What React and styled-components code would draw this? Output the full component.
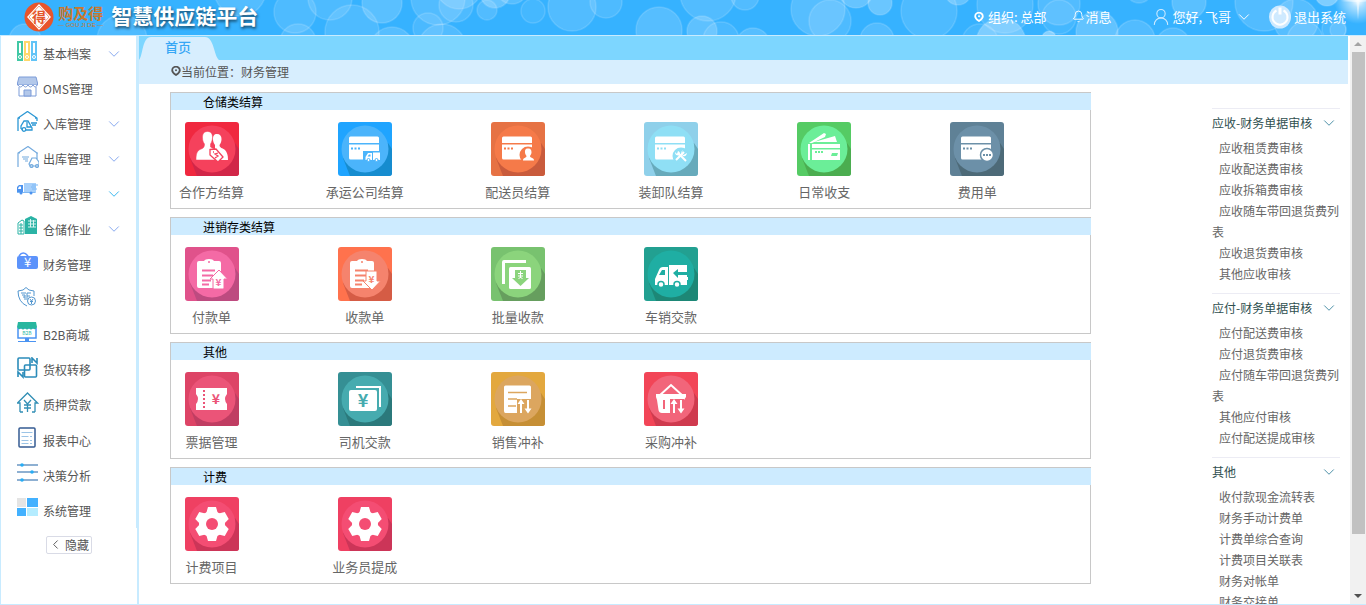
import React, { useState } from 'react';
import styled, { createGlobalStyle } from 'styled-components';
import { Bell, ChevronDown, ChevronLeft, UserRound } from 'lucide-react';

const bubbles = [
  [25, 40, 16, 0.15],
  [122, 40, 25, 0.12],
  [240, -10, 26, 0.15],
  [295, 12, 21, 0.12],
  [298, 42, 18, 0.12],
  [330, -2, 22, 0.12],
  [352, 32, 27, 0.12],
  [382, 3, 20, 0.18],
  [392, 49, 22, 0.16],
  [428, 28, 15, 0.1],
  [438, -2, 27, 0.14],
  [442, 48, 24, 0.14],
  [456, 5, 17, 0.12],
  [459, -14, 23, 0.16],
  [487, 10, 10, 0.14],
  [495, -7, 15, 0.24],
  [512, -12, 16, 0.16],
  [533, 11, 12, 0.08],
  [572, 7, 24, 0.14],
  [606, 2, 16, 0.12],
  [659, 30, 23, 0.16],
  [702, 31, 15, 0.2],
  [708, -7, 28, 0.14],
  [721, 40, 18, 0.1],
  [745, -4, 14, 0.14],
  [753, 45, 17, 0.16],
  [818, 9, 27, 0.16],
  [830, 21, 21, 0.12],
  [856, -9, 17, 0.24],
  [877, 40, 17, 0.14],
  [880, 3, 12, 0.26],
  [929, 11, 28, 0.12],
  [958, -8, 13, 0.24],
  [980, 42, 18, 0.08],
  [1001, 43, 25, 0.3],
  [1005, 5, 28, 0.12],
  [1049, 38, 7, 0.4],
  [1059, 4, 21, 0.14],
  [1059, 17, 17, 0.08],
  [1097, 32, 21, 0.22],
  [1135, 40, 20, 0.14],
  [1139, -10, 13, 0.14],
  [1173, 45, 17, 0.14],
  [1189, 2, 17, 0.18],
  [1264, 2, 29, 0.14],
  [1296, 21, 22, 0.16],
  [1305, 40, 18, 0.12],
  [1327, -6, 12, 0.36],
  [1334, 29, 12, 0.1],
  [1338, 30, 8, 0.14],
];

const Binders = () => (
  <>
    <rect x="0" y="0" width="6" height="20" fill="#41c8a5" />
    <rect x="7" y="0" width="6" height="20" fill="#ffd76a" />
    <rect x="14" y="0" width="6" height="20" fill="#62c4f7" />
    <path d="M2 2h2v10H2zM9 2h2v10H9zM16 2h2v10h-2z" fill="#fff" />
    <g fill="none" stroke="#fff">
      <circle cx="3" cy="16" r="1.5" />
      <circle cx="10" cy="16" r="1.5" />
      <circle cx="17" cy="16" r="1.5" />
    </g>
  </>
);

const Shop = () => (
  <>
    <path d="M2 1h17l1.500 6v2H.5V7z" fill="#b3c8ea" stroke="#7d9cd8" />
    <path d="M1 9q2.500 4 5 0q2.500 4 5 0q2.500 4 5 0q2.500 4 4 0M2 11v9h17v-9" fill="#fff" stroke="#7d9cd8" />
    <path d="M7 14h7v6H7z" fill="#b3c8ea" stroke="#7d9cd8" />
  </>
);

const InStock = () => (
  <g fill="none" stroke="#2b97d4" strokeWidth="1.3">
    <path d="M1 20V7l9.500-6.500L20 7v3M1 7h2M18 7h2" />
    <path d="M4 18v-3l3-5h4l4 7v2H9M4 18h1M10 11v5h4M14 12h6M15 14h4" />
    <circle cx="7" cy="18.500" r="1.800" />
  </g>
);

const OutStock = () => (
  <g fill="none" stroke="#73aade" strokeWidth="1.200">
    <path d="M1 21V7l10-6.500L20 7v6M1 7h2M19 7h2" />
    <path d="M12 18l3-6h4l3 4v4h-9zM5 11h7M6 13h5M8 15h3" />
    <circle cx="14.500" cy="20" r="1.500" />
    <circle cx="20" cy="20" r="1.500" />
  </g>
);

const Truck = () => (
  <>
    <path d="M7 2h12v10H7z" fill="#a7d0fb" />
    <path d="M15 4h6M14 6h5M15 8h5" stroke="#7db8f5" />
    <path d="M0 6l2-2h4v8H0z" fill="#4c92ee" />
    <path d="M1 8l1-2.500h2V8z" fill="#fff" />
    <path d="M0 11h18v1H0z" fill="#7db8f5" />
    <circle cx="4" cy="12" r="1.500" fill="#4c92ee" />
    <circle cx="14" cy="12" r="1.500" fill="#4c92ee" />
  </>
);

const Buildings = () => (
  <>
    <path d="M8 18V3l6-3 6 3v15z" fill="#2bb3a5" />
    <path d="M1 18V7l4-3 2 1v13z" fill="#fff" stroke="#2bb3a5" />
    <path d="M4 7v11M2 9h4M2 12h4M2 15h4" stroke="#2bb3a5" />
    <path d="M13.500 3v8M16.500 4v7M11 5h8M11 8h8M11 11h8" stroke="#d9f3ef" />
  </>
);

const Wallet = () => (
  <>
    <path d="M2 5q4-6 9 0" fill="none" stroke="#5c93fb" strokeWidth="1.500" />
    <rect x="0" y="5" width="21" height="13" rx="2" fill="#5c93fb" />
    <text x="10.500" y="16" textAnchor="middle" fontSize="13" fill="#fff">¥</text>
  </>
);

const Shield = () => (
  <g fill="none" stroke="#5296cf">
    <path d="M10 19Q1 15 1 4l5-1 3-2.500L12 3l5 1v5" />
    <path d="M4 6h5M5 8h3v5M6 10h2M10 6h4M10 6v7M10 9h3" />
    <circle cx="14.500" cy="14" r="4" fill="#fff" />
    <path d="M13 12l1.500 2 1.500-2M14.500 14v3M13 14.500h3" />
  </g>
);

const Online = () => (
  <>
    <rect x="1" y="6" width="18" height="10" fill="#fff" stroke="#4a93f2" strokeWidth="1.500" />
    <path d="M1 0h18l1 5q-2 4-4 1q-2 3-4 0q-2 3-4 0q-2 3-4 0Q2 9 0 5z" fill="#27b69f" />
    <text x="10" y="13" textAnchor="middle" fontSize="5" fill="#27b69f">B2B</text>
    <path d="M8 16h4v3h7v1H1v-1h7z" fill="#4a93f2" />
  </>
);

const Transfer = () => (
  <g fill="none" stroke="#2b8cba" strokeWidth="1.600">
    <rect x="1" y="1" width="12" height="12" rx="1" />
    <rect x="7.500" y="8" width="12" height="12" rx="1" />
    <path d="M15 6V1l5 5V1M1 20v-5l5 5v-5" />
  </g>
);

const Pledge = () => (
  <g fill="none" stroke="#328fb5" strokeWidth="1.300">
    <path d="M3 20v-9H.5L10.500 1l10 10H18v9M3 20h3M15 20h3" />
    <path d="M7 8l3.500 4L14 8M10.500 12v8M7 13h7M7 16h7" />
  </g>
);

const Report = () => (
  <>
    <rect x="2" y="1" width="16" height="19" rx="1" fill="#fff" stroke="#355b92" strokeWidth="1.500" />
    <path d="M4.500 5.500h11M4.500 9.500h7M13 9.500h2M4.500 13.500h7M13 13.500h2M4.500 16.500h7M13 16.500h2" stroke="#9cc4e6" />
  </>
);

const Sliders = () => (
  <>
    <path d="M0 3h21M0 10h21M0 18h21" stroke="#6a97c4" strokeWidth="1.500" />
    <g fill="#27adf5">
      <circle cx="5" cy="3" r="1.800" />
      <circle cx="15" cy="10" r="1.800" />
      <circle cx="5" cy="18" r="1.800" />
    </g>
  </>
);

const Blocks = () => (
  <>
    <path d="M0 1h9v9H0z" fill="#e4e4e4" />
    <path d="M10 1h11v9H10z" fill="#42b1ff" />
    <path d="M0 11h9v8H0z" fill="#42b1ff" />
    <path d="M10 11h11v8H10z" fill="#b4ecff" />
  </>
);

const menu = [
  { name: '基本档案', icon: <Binders />, more: true },
  { name: 'OMS管理', icon: <Shop /> },
  { name: '入库管理', icon: <InStock />, more: true },
  { name: '出库管理', icon: <OutStock />, more: true },
  { name: '配送管理', icon: <Truck />, more: true, active: true },
  { name: '仓储作业', icon: <Buildings />, more: true },
  { name: '财务管理', icon: <Wallet /> },
  { name: '业务访销', icon: <Shield /> },
  { name: 'B2B商城', icon: <Online /> },
  { name: '货权转移', icon: <Transfer /> },
  { name: '质押贷款', icon: <Pledge /> },
  { name: '报表中心', icon: <Report /> },
  { name: '决策分析', icon: <Sliders /> },
  { name: '系统管理', icon: <Blocks /> },
];

// glyphs on the tiles: white on the disc, `c` is the disc colour for cut-outs
const Card = ({ c }) => (
  <>
    <path d="M11 21v-5q0-1.500 1.500-1.500h27q1.500 0 1.500 1.500v5zM11 22.500h30V36q0 1.500-1.500 1.500h-27Q11 37.500 11 36z" />
    <path d="M13 25.500h2v2h-2zM16.500 25.500h2v2h-2zM20 25.500h2v2h-2z" fill={c} />
  </>
);

const partners = c => (
  <>
    <path d="M32 12c3 0 4.500 2 4.500 5 0 2-.5 4-2 6 0 3 3 3 5.500 5 2 2 3 5 3 10H30V23c-1.500-2-2-4-2-6 0-3 1-5 4-5z" />
    <path
      d="M22.500 9.500c4 0 5 3 5 6 0 2-1 5-2 6.500v3c3 2 8 3 10 13H11c0-6 1-9 4-10.500 3-1 4.500-2 4.500-5.500-1.500-2-2-4-2-6.500 0-3 1-6 5-6z"
      stroke={c}
      strokeWidth="0.500"
    />
    <path d="M25 27.500l6-.5 7 8-5 5-8-7z" stroke={c} strokeWidth="1.300" />
    <path d="M33 31l-3 1 3 2-3 2M28 30h1" fill="none" stroke={c} strokeWidth="1.300" />
  </>
);

const carrier = c => (
  <>
    <Card c={c} />
    <path d="M25 41V29h18v12z" fill={c} />
    <path d="M35 30.500h7V38h-7zM27.500 38v-3l2.500-4h4v7z" />
    <path d="M29.500 34.500l1.500-2h1.500v2z" fill={c} />
    <circle cx="30.500" cy="38" r="1.500" stroke={c} />
    <circle cx="38.500" cy="38" r="1.500" stroke={c} />
  </>
);

const courier = c => (
  <>
    <Card c={c} />
    <circle cx="37" cy="33" r="8.500" fill={c} />
    <path d="M37 26.500c3 0 3.500 2 3.500 4 0 1.500-1 2.500-1.500 3.500 0 2 4 1.500 4 4.500H32c0-3 3.500-2.500 3.500-4.500-.5-1-1.500-2-1.500-3.500 0-2 0-4 3-4z" />
  </>
);

const loaders = c => (
  <>
    <Card c={c} />
    <circle cx="37" cy="34" r="8.500" fill={c} />
    <path d="M34 31l8 8M32 38l8-8" fill="none" stroke="#fff" strokeWidth="2" />
    <path d="M31 30l2 2 1-3q3 1 1.500 4.500Q31 34 31 30zM39 28l-1.500 3.500 2 1.500 3.500-2q-1 4-4 3l-2-2q0-3 2-4z" />
  </>
);

const daily = c => (
  <>
    <path d="M12 21l15-10 2 1-1 3-13 6zM17 20l21-6 2 6zM11 22h2v16h-2zM15 22h28v4H15zM15 27.500h28V38H15z" />
    <path d="M18 29h2v2h-2zM21 29h2v2h-2zM24 29h2v2h-2zM35 31h6l-1 3h-6z" fill={c} />
  </>
);

const expense = c => (
  <>
    <Card c={c} />
    <circle cx="37" cy="33" r="6.500" stroke={c} strokeWidth="1.500" />
    <path d="M33 32h2v2h-2zM36 32h2v2h-2zM39 32h2v2h-2z" fill={c} />
  </>
);

const Clipboard = ({ c }) => (
  <>
    <path d="M12 16q0-2 2-2h5q1-2 5-2t5 2h5q2 0 2 2v23q0 2-2 2H14q-2 0-2-2z" />
    <circle cx="24" cy="15" r="1" fill={c} />
    <path d="M17 23.500h13M17 28.500h11M17 33.500h9M17 37.500h7" stroke={c} strokeWidth="1.800" />
  </>
);

const Yen = ({ x, y, size, c }) => (
  <text x={x} y={y} textAnchor="middle" fontSize={size} fontWeight="700" fill={c}>
    ¥
  </text>
);

const payment = c => (
  <>
    <Clipboard c={c} />
    <path d="M34 23l8.500 9H39v9q0 1-1 1h-9q-1 0-1-1v-9h-3z" stroke={c} />
    <Yen x="33.500" y="39" size="10" c={c} />
  </>
);

const receipt = c => (
  <>
    <Clipboard c={c} />
    <path d="M28 24h11v10h3.500L34 43 25 34h3z" stroke={c} />
    <Yen x="33.500" y="36" size="10" c={c} />
  </>
);

const batch = c => (
  <>
    <path d="M11 37V15q0-2 2-2h22v3H14v21z" />
    <path d="M16 39V18h20" fill="none" stroke={c} />
    <rect x="18" y="20" width="22" height="22" rx="1.500" />
    <path d="M24 23h11v8h3l-8.500 8-8.500-8h3z" fill={c} />
    <path d="M29.500 24v7M27 26.500h5M27 29h5M27.500 32l2-2 2 2" fill="none" stroke="#fff" />
  </>
);

const vanSale = c => (
  <>
    <path d="M11 38v-6l4-9q1-3 4-3h5v18zM25 18h18v20H25z" />
    <path d="M15 28l3-5h3v5z" fill={c} />
    <path d="M29 26l5-4v3h9v3h-9v3z" fill={c} />
    <path d="M40 30h4v3h-4z" />
    <circle cx="17" cy="37.500" r="3" stroke={c} strokeWidth="1.500" />
    <circle cx="33" cy="37.500" r="3" stroke={c} strokeWidth="1.500" />
  </>
);

const ticket = c => (
  <>
    <path d="M11 16h31v6q-4 5 0 10v6H11v-6q4-5 0-10z" />
    <path d="M19 18v19" stroke={c} strokeWidth="2" strokeDasharray="2 2" />
    <Yen x="31" y="32" size="14" c={c} />
  </>
);

const driver = c => (
  <>
    <path d="M18 15h24v20" fill="none" stroke="#fff" strokeWidth="2" />
    <rect x="11" y="18" width="28" height="21" rx="2" />
    <Yen x="25" y="35" size="18" c={c} />
  </>
);

const Arrows = ({ c }) => (
  <>
    <path d="M26 27h14v15H26z" fill={c} />
    <path d="M30 41V31M37 28v10" stroke="#fff" strokeWidth="2" />
    <path d="M26.500 32l3.500-5 3.500 5zM33.500 36.500l3.500 5 3.500-5z" />
  </>
);

const saleAdjust = c => (
  <>
    <path d="M13 15q0-1.500 1.500-1.500h24q1.500 0 1.500 1.500v26H14.500Q13 41 13 39z" />
    <path d="M17 20.500h19M17 27h9M17 34h8" stroke={c} strokeWidth="1.500" />
    <Arrows c={c} />
  </>
);

const buyAdjust = c => (
  <>
    <path d="M15 24l12-11 12 11" fill="none" stroke="#fff" strokeWidth="2" />
    <path d="M12 22h30v3l-2 3-1 10q0 3-3 3H18q-3 0-3.500-3L13 28l-1-3z" />
    <path d="M20 28v9" stroke={c} strokeWidth="2" />
    <Arrows c={c} />
  </>
);

const gear = c => (
  <>
    <circle cx="27" cy="27" r="13" />
    {[0, 60, 120, 180, 240, 300].map(angle => (
      <path key={angle} d="M23 10h8l2 7H21z" transform={`rotate(${angle} 27 27)`} />
    ))}
    <circle cx="27" cy="27" r="6" fill={c} />
  </>
);

const groups = [
  {
    title: '仓储类结算',
    items: [
      { name: '合作方结算', art: partners, colors: ['#f0283f', '#f5415c', '#d12648'] },
      { name: '承运公司结算', art: carrier, colors: ['#1fa4ff', '#4bb4fb', '#168ccf'] },
      { name: '配送员结算', art: courier, colors: ['#e67244', '#f57a49', '#c95b3c'] },
      { name: '装卸队结算', art: loaders, colors: ['#8fd0ea', '#8fdff5', '#67aabb'] },
      { name: '日常收支', art: daily, colors: ['#55cb64', '#6bee98', '#4bad50'] },
      { name: '费用单', art: expense, colors: ['#5f8196', '#6c90a8', '#4d6a78'] },
    ],
  },
  {
    title: '进销存类结算',
    items: [
      { name: '付款单', art: payment, colors: ['#e0528b', '#f46aa5', '#bd4b80'] },
      { name: '收款单', art: receipt, colors: ['#ff724d', '#f5836d', '#d55c45'] },
      { name: '批量收款', art: batch, colors: ['#78c26f', '#8bd47c', '#669e5e'] },
      { name: '车销交款', art: vanSale, colors: ['#22a091', '#1faea3', '#1d8776'] },
    ],
  },
  {
    title: '其他',
    items: [
      { name: '票据管理', art: ticket, colors: ['#dd4466', '#eb5478', '#c03d62'] },
      { name: '司机交款', art: driver, colors: ['#358f94', '#46abaf', '#2b797b'] },
      { name: '销售冲补', art: saleAdjust, colors: ['#e3a83e', '#dca65f', '#c68f35'] },
      { name: '采购冲补', art: buyAdjust, colors: ['#f24557', '#f2657a', '#cf3a4e'] },
    ],
  },
  {
    title: '计费',
    items: [
      { name: '计费项目', art: gear, colors: ['#ef4062', '#f44d73', '#cc3558'] },
      { name: '业务员提成', art: gear, colors: ['#ef4062', '#f44d73', '#cc3558'] },
    ],
  },
];

const reports = [
  {
    title: '应收-财务单据审核',
    items: ['应收租赁费审核', '应收配送费审核', '应收拆箱费审核', '应收随车带回退货费列表', '应收退货费审核', '其他应收审核'],
  },
  {
    title: '应付-财务单据审核',
    items: ['应付配送费审核', '应付退货费审核', '应付随车带回退货费列表', '其他应付审核', '应付配送提成审核'],
  },
  {
    title: '其他',
    items: ['收付款现金流转表', '财务手动计费单', '计费单综合查询', '计费项目关联表', '财务对帐单', '财务交接单'],
  },
];

const Pin = () => (
  <svg width="10" height="10" viewBox="0 0 10 10" fill="none" stroke="currentColor">
    <path d="M5 9Q1.200 6.500 1.200 4.200a3.800 3.500 0 017.600 0Q8.800 6.500 5 9z" strokeWidth="1.800" />
    <circle cx="5" cy="4.200" r="1" fill="currentColor" stroke="none" />
  </svg>
);

const Tile = ({ name, art, colors }) => {
  const [base, disc, shade] = colors;

  return (
    <TileLink href="#">
      <svg width="54" height="54" viewBox="0 0 54 54" fill="#fff">
        <rect width="54" height="54" rx="3" fill={base} />
        <path d="M5 36l7 18h39q3 0 3-3V27l-4-6z" fill={shade} />
        <circle cx="27" cy="27" r="23.500" fill={disc} />
        {art(disc)}
      </svg>
      <TileName>{name}</TileName>
    </TileLink>
  );
};

const ReportGroup = ({ title, items }) => {
  const [open, setOpen] = useState(true);

  return (
    <ReportSection>
      <ReportTitle onClick={() => setOpen(!open)}>
        {title}
        <ChevronDown size={18} strokeWidth={1.3} color="#4a8fa6" />
      </ReportTitle>
      {open && (
        <PlainList>
          {items.map(item => (
            <ReportItem key={item}>
              <a href="#">{item}</a>
            </ReportItem>
          ))}
        </PlainList>
      )}
    </ReportSection>
  );
};

const App = () => {
  const [hidden, setHidden] = useState(false);

  return (
    <Page>
      <GlobalStyle />
      <Header>
        <Backdrop viewBox="0 0 1366 35" preserveAspectRatio="xMidYMid slice">
          <defs>
            <radialGradient id="flare">
              <stop offset="0" stopColor="#fff" />
              <stop offset="0.3" stopColor="#fff" stopOpacity="0.6" />
              <stop offset="1" stopColor="#fff" stopOpacity="0" />
            </radialGradient>
          </defs>
          {bubbles.map(([x, y, r, alpha]) => (
            <circle
              key={`${x}-${y}`}
              cx={x}
              cy={y}
              r={r}
              fill="#fff"
              fillOpacity={alpha}
              stroke="#fff"
              strokeOpacity="0.14"
              strokeWidth="1.500"
            />
          ))}
          <circle cx="1358" cy="0" r="24" fill="url(#flare)" />
          <path d="M1358-8l1.500 7 16 2-16 1-1.500 18-1.500-18-16-1 16-2z" fill="#fff" fillOpacity="0.5" />
        </Backdrop>
        <Brand>
          <svg width="30" height="32" viewBox="0 0 30 32">
            <circle cx="15" cy="16" r="14.500" fill="#e8552b" />
            <path d="M15 3l12 13-12 13L3 16z" fill="#fff" />
            <path d="M15 5l10 11-10 11L5 16z" fill="none" stroke="#f2a07f" />
            <text x="15" y="21" textAnchor="middle" fontSize="14" fontWeight="700" fill="#e4552c">得</text>
          </svg>
          <BrandText>
            <BrandName>购及得</BrandName>
            <BrandLatin>— GOU JI DE —</BrandLatin>
          </BrandText>
          <Title>智慧供应链平台</Title>
        </Brand>
        <Account>
          <HeaderLink href="#" $gap={4}>
            <Pin />
            组织: 总部
          </HeaderLink>
          <HeaderLink href="#" $gap={0} $before={26}>
            <Bell size={13} strokeWidth={1.7} />
            消息
          </HeaderLink>
          <HeaderLink href="#" $gap={1} $before={40}>
            <UserRound size={20} strokeWidth={1.3} color="#cfeaff" />
            您好, 飞哥
            <UserArrow size={18} strokeWidth={1.3} />
          </HeaderLink>
          <HeaderLink href="#" $gap={3} $before={16}>
            <svg width="22" height="24" viewBox="0 0 22 24" fill="none">
              <ellipse cx="11" cy="12" rx="11" ry="11.500" fill="#cfeaff" />
              <path d="M7.500 5.500a7.500 7.500 0 107 0" stroke="#fff" strokeWidth="2" />
              <path d="M11 2.500v7" stroke="#fff" strokeWidth="3" />
            </svg>
            退出系统
          </HeaderLink>
        </Account>
      </Header>
      <Body>
        <Sidebar>
          {!hidden && (
            <Menu>
              {menu.map(({ name, icon, more, active }) => (
                <li key={name}>
                  <MenuLink href="#">
                    <MenuIcon width="22" height="22" viewBox="0 0 22 22">
                      {icon}
                    </MenuIcon>
                    {name}
                    {more && <MenuArrow size={18} strokeWidth={1.3} $active={active} />}
                  </MenuLink>
                </li>
              ))}
            </Menu>
          )}
          <HideButton onClick={() => setHidden(!hidden)}>
            <ChevronLeft size={15} strokeWidth={1.5} />
            隐藏
          </HideButton>
        </Sidebar>
        <Main>
          <Workspace>
            <TabBar>
              <Tab>
                <TabShape viewBox="0 0 80 24" preserveAspectRatio="none">
                  <path d="M0 24C4 20 3 1 12 1h54c9 0 9 19 14 23z" fill="#d7eefe" />
                </TabShape>
                <TabName>首页</TabName>
              </Tab>
            </TabBar>
            <Location>
              <Pin />
              当前位置：财务管理
            </Location>
            <Content>
              <Panels>
                {groups.map(({ title, items }) => (
                  <Panel key={title}>
                    <PanelTitle>{title}</PanelTitle>
                    <Tiles>
                      {items.map(item => (
                        <Tile key={item.name} {...item} />
                      ))}
                    </Tiles>
                  </Panel>
                ))}
              </Panels>
              <Reports>
                {reports.map(group => (
                  <ReportGroup key={group.title} {...group} />
                ))}
              </Reports>
            </Content>
          </Workspace>
          <ScrollBar>
            <ScrollArrow viewBox="0 0 16 16">
              <path d="M4 10l4-4 4 4z" fill="#a3a3a3" />
            </ScrollArrow>
            <ScrollTrack>
              <ScrollThumb />
            </ScrollTrack>
            <ScrollArrow viewBox="0 0 16 16">
              <path d="M4 6l4 4 4-4z" fill="#505050" />
            </ScrollArrow>
          </ScrollBar>
        </Main>
      </Body>
    </Page>
  );
};

const GlobalStyle = createGlobalStyle`
  * {
    box-sizing: border-box;
  }

  body {
    margin: 0;
    font-family: 'Noto Sans CJK SC', sans-serif;
    font-size: 12px;
    color: #555;
  }

  a {
    color: inherit;
    text-decoration: none;
  }

  button {
    padding: 0;
    border: none;
    background: none;
    color: inherit;
    font: inherit;
    cursor: pointer;
  }

  svg {
    flex-shrink: 0;
  }
`;

const Page = styled.div`
  display: flex;
  flex-direction: column;
  height: 100vh;
  overflow: hidden;
  background-color: #fff;
`;

const Header = styled.header`
  position: relative;
  display: flex;
  flex-shrink: 0;
  align-items: center;
  justify-content: space-between;
  height: 36px;
  padding: 0 20px 2px 24px;
  border-bottom: 1px solid #c8ebff;
  background-color: #36b2ff;
  color: #fff;
`;

const Backdrop = styled.svg`
  position: absolute;
  inset: 0;
  width: 100%;
  height: 100%;
`;

const Brand = styled.div`
  position: relative;
  display: flex;
  align-items: center;
`;

const BrandText = styled.div`
  display: flex;
  flex-direction: column;
  align-items: center;
  margin: 0 8px 0 4px;
`;

const BrandName = styled.span`
  color: #c9782f;
  font-size: 15px;
  font-weight: 700;
  line-height: 16px;
`;

const BrandLatin = styled.span`
  color: #c9782f;
  font-family: 'Liberation Sans', sans-serif;
  font-size: 6px;
  line-height: 8px;
  white-space: nowrap;
`;

const Title = styled.h1`
  margin: 0;
  padding-bottom: 4px;
  font-size: 21px;
  font-weight: 700;
  line-height: 28px;
  text-shadow: 1px 2px 3px rgba(0, 0, 0, 0.6);
`;

const Account = styled.nav`
  position: relative;
  display: flex;
  align-items: center;
`;

const HeaderLink = styled.a`
  display: flex;
  align-items: center;
  gap: ${({ $gap }) => $gap}px;
  margin-left: ${({ $before = 0 }) => $before}px;
  font-size: 13px;
  white-space: nowrap;
`;

const UserArrow = styled(ChevronDown)`
  margin-left: 3px;
`;

const Body = styled.div`
  display: flex;
  flex: 1;
  min-height: 0;
  border-bottom: 1px solid #c8ebff;
  border-left: 1px solid #c8ebff;
`;

const Sidebar = styled.aside`
  flex-shrink: 0;
  width: 136px;
`;

const PlainList = styled.ul`
  margin: 0;
  padding: 0;
  list-style: none;
`;

const Menu = styled(PlainList)`
  display: grid;
  grid-auto-rows: 1fr;
  height: 492px;
  border-right: 1px solid #c8ebff;
`;

const MenuLink = styled.a`
  display: flex;
  align-items: center;
  height: 100%;
  padding: 0 13px 0 16px;
`;

const MenuIcon = styled.svg`
  margin: 0 4px 4px 0;
`;

const MenuArrow = styled(ChevronDown)`
  margin-left: auto;
  color: ${({ $active }) => ($active ? '#37b6ef' : '#86a8ef')};
`;

const HideButton = styled.button`
  display: flex;
  align-items: center;
  gap: 2px;
  height: 18px;
  margin: 8px 0 0 45px;
  padding: 0 2px 2px 1px;
  border: 1px solid #d9dbe6;
  border-radius: 2px;
`;

const Main = styled.main`
  display: flex;
  flex: 1;
  gap: 2px;
  min-width: 0;
  border-left: 2px solid #c8ebff;
`;

const Workspace = styled.div`
  flex: 1;
  min-width: 0;
  overflow: hidden;
`;

const TabBar = styled.div`
  display: flex;
  height: 24px;
  background-color: #7dd6ff;
`;

const Tab = styled.button`
  position: relative;
  width: 80px;
  padding: 0 2px 4px 0;
  color: #37a7f5;
  font-size: 13px;
`;

const TabShape = styled.svg`
  position: absolute;
  inset: 0;
  width: 100%;
  height: 100%;
`;

const TabName = styled.span`
  position: relative;
  font-weight: 500;
`;

const Location = styled.div`
  display: flex;
  align-items: center;
  height: 24px;
  padding: 0 0 2px 32px;
  background-color: #d7eefe;
`;

const Content = styled.div`
  display: flex;
  gap: 121px;
  padding: 8px 8px 0 31px;
`;

const Panels = styled.div`
  display: flex;
  flex: 1;
  flex-direction: column;
  gap: 8px;
`;

const Panel = styled.section`
  border: 1px solid #c8c8c8;
`;

const PanelTitle = styled.h2`
  margin: 0 -1px 0 0;
  padding-left: 32px;
  background-color: #cdebff;
  color: #000;
  font-size: 12px;
  font-weight: 400;
  line-height: 17px;
`;

const Tiles = styled.div`
  display: grid;
  grid-template-columns: repeat(6, 1fr);
  padding: 12px 0 6px;
`;

const TileLink = styled.a`
  display: flex;
  flex-direction: column;
  align-items: center;
  width: 81px;
`;

const TileName = styled.span`
  margin-top: 6px;
  color: #666;
  font-size: 13px;
  line-height: 20px;
  white-space: nowrap;
`;

const Reports = styled.aside`
  width: 128px;
  height: 0;
  margin-top: 16px;
`;

const ReportSection = styled.section`
  padding-bottom: 9px;
  border-top: 1px solid #ececf4;
`;

const ReportTitle = styled.button`
  display: flex;
  align-items: center;
  justify-content: space-between;
  width: 100%;
  padding-right: 2px;
  color: #2f4f4f;
  line-height: 28px;
`;

const ReportItem = styled.li`
  color: #666;
  line-height: 21px;
  text-indent: 7px;
`;

const ScrollBar = styled.div`
  display: flex;
  flex-direction: column;
  width: 16px;
  background-color: #f1f1f1;
`;

const ScrollArrow = styled.svg`
  width: 16px;
  height: 16px;
`;

const ScrollTrack = styled.div`
  flex: 1;
  padding: 0 1px 0 2px;
`;

const ScrollThumb = styled.div`
  height: 90%;
  background-color: #c1c1c1;
`;

export default App;
